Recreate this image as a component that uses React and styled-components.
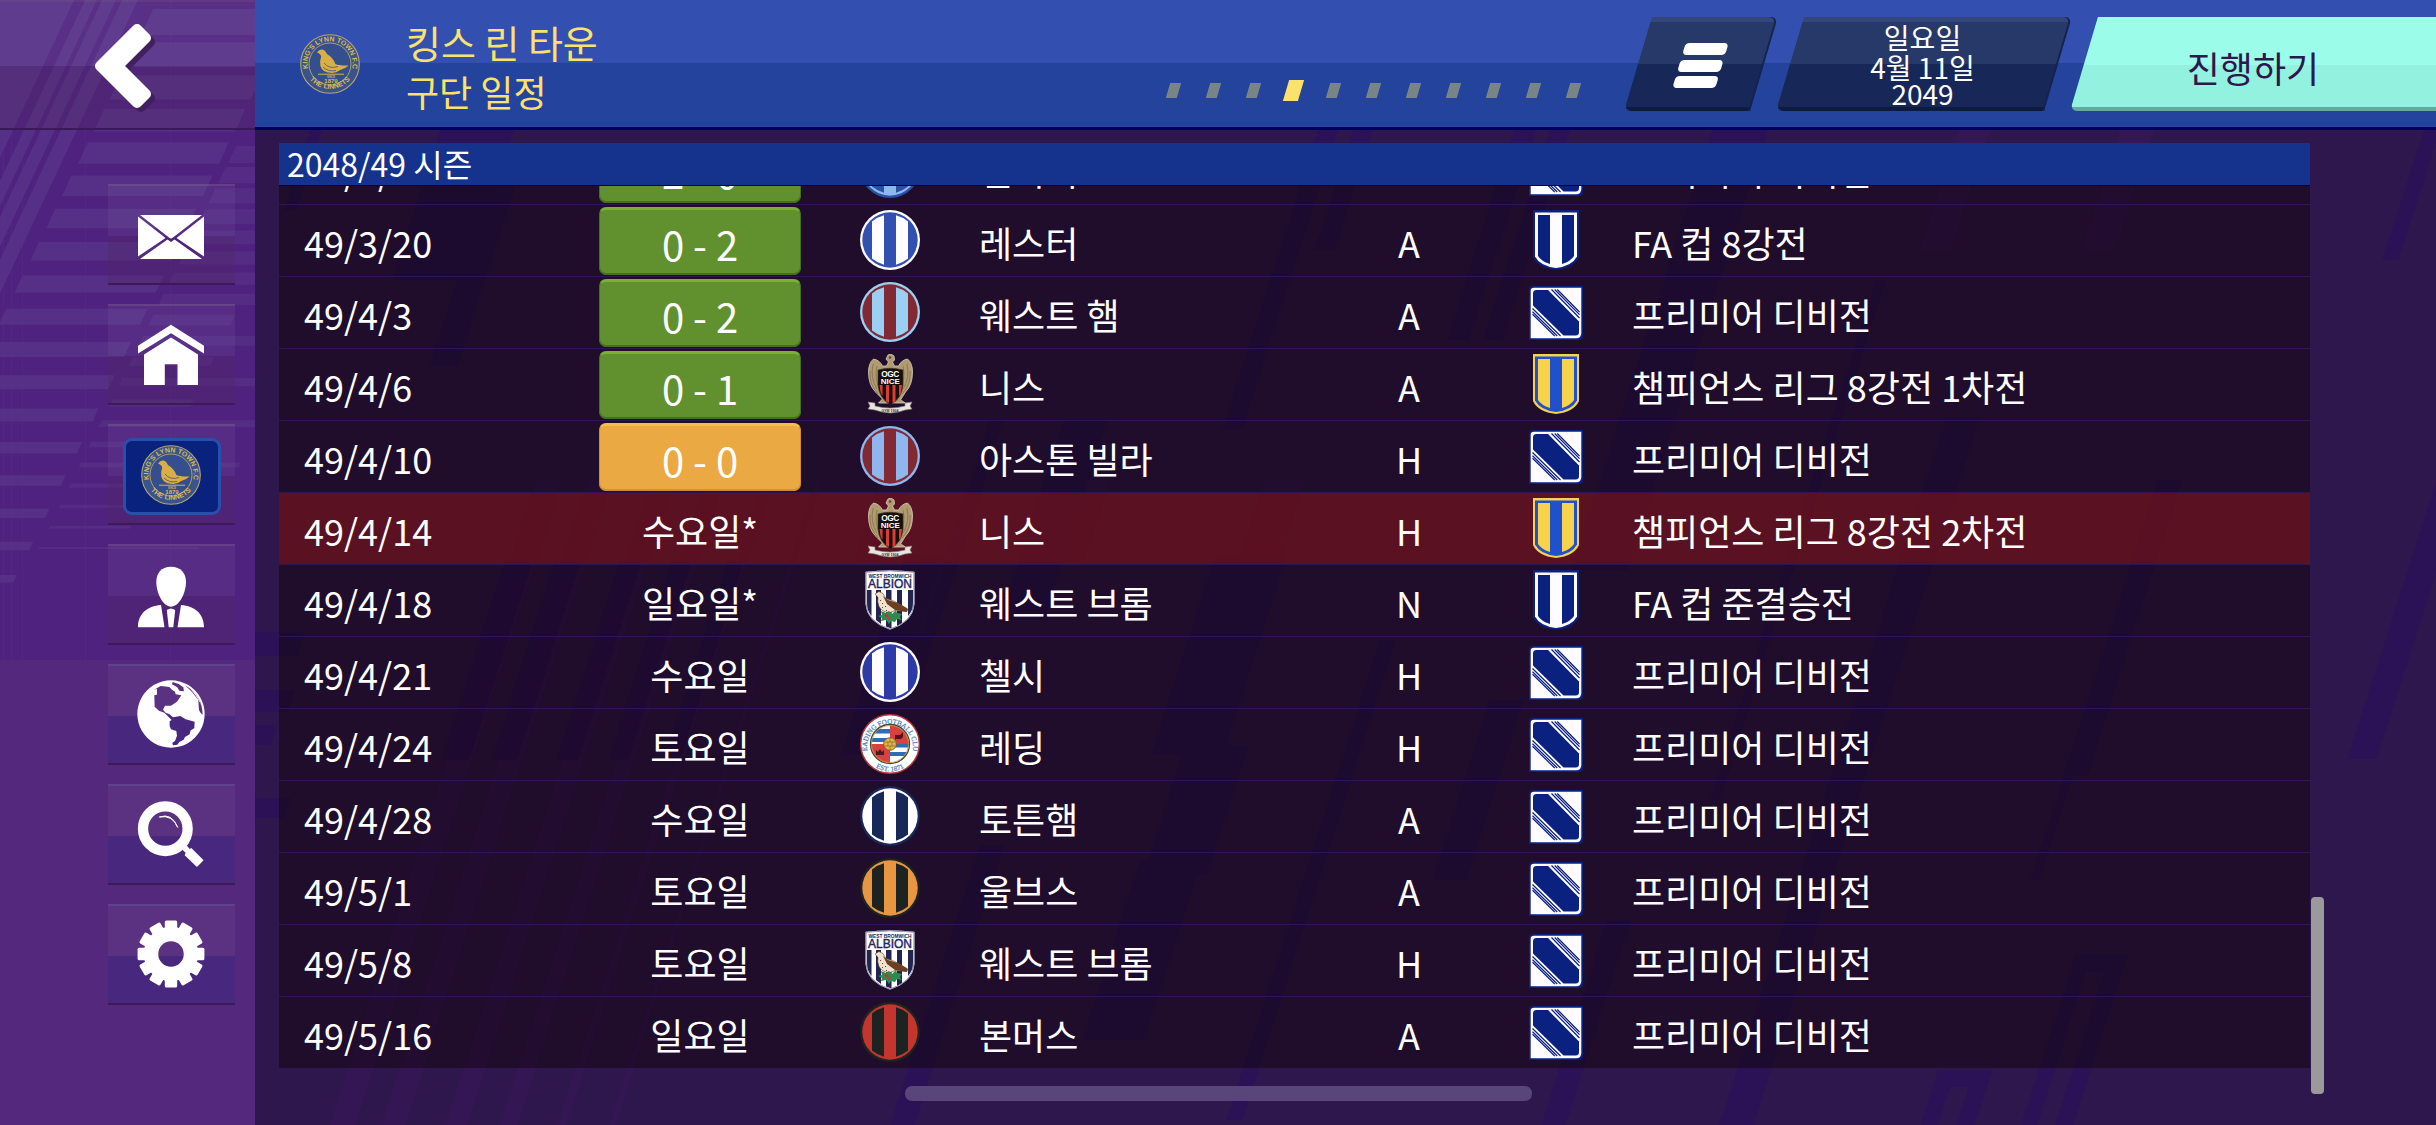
import React from "react";
import styled, { createGlobalStyle } from "styled-components";

const GlobalStyle = createGlobalStyle`
  * {
    box-sizing: border-box;
  }

  body {
    margin: 0;
    background-color: #2e174d;
    font-family: "Noto Sans CJK KR", "Noto Sans", sans-serif;
    color: white;
  }
`;

const Page = styled.div`
  position: relative;
  width: 2436px;
  height: 1125px;
  overflow: hidden;
  display: grid;
  grid-template-columns: 255px 1fr;
  background-color: #2e174d;
`;

const Backdrop = styled.svg`
  position: absolute;
  top: 0;
  left: 0;
`;

const Sidebar = styled.nav`
  position: relative;
  background-color: #54287c;
`;

const BackButton = styled.div`
  position: relative;
  height: 130px;
  border-top: 2px solid rgba(255, 255, 255, 0.1);
  border-bottom: 2px solid #3a1a5a;
  background: linear-gradient(
    rgba(255, 255, 255, 0.06) 64px,
    rgba(82, 44, 96, 0.25) 64px
  );
  margin-bottom: 54px;

  svg {
    display: block;
    margin-top: -2px;
  }
`;

const NavList = styled.div`
  position: relative;
  display: flex;
  flex-direction: column;
  gap: 19px;
  margin-left: 108px;
  width: 127px;
`;

const NavButton = styled.div`
  height: 101px;
  border-top: 2px solid rgba(255, 255, 255, 0.13);
  border-bottom: 2px solid #3c1a56;
  background: linear-gradient(
    rgba(255, 255, 255, 0.045) 50px,
    ${(props) => (props.$low ? "rgba(50, 38, 130, 0.34)" : "rgba(80, 36, 96, 0.3)")} 50px
  );

  > svg {
    display: block;
    margin-top: -2px;
  }
`;

const Selected = styled.div`
  width: 98px;
  height: 77px;
  margin: 12px 0 0 15px;
  border: 3px solid #2b4dab;
  border-radius: 9px;
  background-color: #08227d;
  display: flex;
  align-items: center;
  justify-content: center;
  padding: 0 2px 4px 0;
`;

const Main = styled.main`
  position: relative;
  display: flex;
  flex-direction: column;
  min-width: 0;
`;

const Header = styled.header`
  height: 130px;
  display: flex;
  border-bottom: 3px solid #00005c;
  background: linear-gradient(#3350b0 63px, #24439d 63px);
  overflow: hidden;
`;

const HeaderCrest = styled.div`
  flex: none;
  margin: 34px 0 0 45px;
  width: 60px;
`;

const Titles = styled.div`
  flex: none;
  margin: 18px 0 0 46px;
  width: 747px;
  color: #fae26c;
`;

const Title = styled.div`
  font-size: 38px;
  line-height: 48px;
`;

const Subtitle = styled.div`
  font-size: 36px;
  line-height: 50px;
`;

const Pager = styled.div`
  flex: none;
  display: flex;
  align-items: center;
  height: 22px;
  margin: 79px 45px 0 0;
  width: 440px;
`;

const PagerSlot = styled.div`
  width: 40px;
  flex: none;
  display: flex;
  justify-content: center;
`;

const Dash = styled.div`
  width: ${(props) => (props.$active ? 15 : 11)}px;
  height: ${(props) => (props.$active ? 21 : 15)}px;
  background-color: ${(props) => (props.$active ? "#fae26c" : "#778488")};
  transform: skewX(-16.5deg);
`;

const Slanted = styled.div`
  position: relative;
  flex: none;
  width: ${(props) => props.$width}px;
  height: 94px;
  margin: 17px 26px 0 0;
  display: flex;
  flex-direction: column;
  align-items: center;

  &:before {
    content: "";
    position: absolute;
    inset: 0;
    transform: skewX(-16.5deg);
    border-radius: 0 7px 0 7px;
    background: ${(props) =>
      props.$mint
        ? "linear-gradient(#9bfde9 0 48px, #92f2df 48px 90px, #66aa9c 90px)"
        : "linear-gradient(#35477a 0 5px, #273969 5px 47px, #172858 47px 90px, #0e1b3e 90px)"};
    box-shadow: ${(props) => (props.$mint ? "none" : "inset -2px 0 0 #142350")};
  }
`;

const Bars = styled.div`
  position: relative;
  display: flex;
  flex-direction: column;
  gap: 4.5px;
  margin: 26px 2px 0 0;
  transform: skewX(-16.5deg);
`;

const Bar = styled.div`
  width: 43px;
  height: 12px;
  border-radius: 4px;
  background-color: white;
`;

const DateLine = styled.div`
  position: relative;
  font-size: 28px;
  line-height: ${(props) => props.$height}px;
  margin: ${(props) => props.$top || 0}px 3px 0 0;
`;

const Continue = styled.div`
  position: relative;
  margin: 24px 0 0 -62px;
  font-size: 36px;
  line-height: 52px;
  color: #2e174d;
`;

const Content = styled.div`
  position: relative;
  display: flex;
  padding: 13px 0 0 24px;
`;

const Table = styled.section`
  width: 2031px;
`;

const Season = styled.div`
  height: 42px;
  padding-left: 8px;
  background-color: #15338d;
  font-size: 32px;
  line-height: 41px;
`;

const List = styled.div`
  height: 883px;
  overflow: hidden;
  border-top: 1px solid #06003c;
  background-color: rgba(20, 5, 18, 0.56);
`;

const Rows = styled.div`
  margin-top: -54px;
`;

const Row = styled.div`
  height: 72px;
  display: grid;
  grid-template-columns: 295px 202px 178px 330px 200px 94px 1fr;
  align-items: center;
  padding-left: 25px;
  border-top: 1px solid #2f1456;
  background-color: ${(props) => (props.$next ? "rgba(130, 20, 26, 0.6)" : "transparent")};
  font-size: 36px;
  white-space: nowrap;
`;

const Cell = styled.div`
  line-height: 52px;
  padding-top: 3px;
  text-align: ${(props) => props.$align || "left"};
`;

const Competition = styled(Cell)`
  padding-left: 29px;
`;

const Icon = styled.div`
  display: flex;
  justify-content: center;
  padding-bottom: 2px;
`;

const resultColors = {
  win: { fill: "#61912e", light: "#7bb036", dark: "#466f20" },
  draw: { fill: "#eaa943", light: "#f6bd4c", dark: "#d58f33" },
};

const Score = styled.div`
  height: 68px;
  border-radius: 7px;
  background-color: ${(props) => resultColors[props.$result].fill};
  border: 1px solid ${(props) => resultColors[props.$result].dark};
  border-top: 3px solid ${(props) => resultColors[props.$result].light};
  box-shadow: inset 0 -1px 0 ${(props) => resultColors[props.$result].dark};
  font-size: 40px;
  line-height: 69px;
  text-align: center;
`;

const ScrollThumb = styled.div`
  width: 13px;
  height: 197px;
  margin: 754px 0 0 1px;
  border-radius: 4px;
  background-color: #9c999c;
`;

const HomeIndicator = styled.div`
  position: absolute;
  left: 905px;
  bottom: 24px;
  width: 627px;
  height: 15px;
  border-radius: 7px;
  background-color: #5a457a;
`;

// slanted band: x is the left edge at the top, slope is how far it leans per pixel
const band = (x, y, w, h, slope = 0.32) =>
  `M${x} ${y}h${w}l${-h * slope} ${h}h${-w}z`;

const blueBands = [
  [310, 130, 12, 80], [440, 130, 74, 150], [487, 187, 28, 180],
  [1318, 130, 20, 300], [1353, 130, 20, 120], [1514, 130, 22, 210], [1550, 130, 20, 210],
  [1712, 130, 56, 440], [1876, 280, 10, 520], [1946, 417, 34, 708], [2424, 130, 16, 130],
  [2440, 470, 29, 289], [2158, 480, 24, 296], [2068, 762, 9, 118], [1215, 555, 72, 200],
  [1185, 745, 64, 130], [1140, 860, 62, 180], [905, 555, 40, 200], [990, 420, 14, 260],
  [1064, 420, 44, 200], [1380, 640, 16, 480], [1490, 700, 34, 180], [1607, 920, 24, 205],
  [980, 845, 24, 280], [2076, 954, 16, 171], [2110, 954, 18, 171], [2092, 954, 18, 18],
  [1938, 1071, 17, 54], [1974, 1071, 18, 54], [1955, 1071, 19, 16],
  [505, 560, 28, 200], [555, 560, 26, 200], [620, 560, 22, 200], [672, 560, 20, 200],
  [728, 560, 16, 200], [255, 632, 50, 24], [255, 690, 40, 22], [255, 725, 22, 20], [255, 798, 36, 20],
];

const purpleBands = [
  [536, 480, 26, 645], [588, 480, 24, 645], [652, 480, 22, 645], [706, 480, 18, 645],
  [764, 480, 9, 645], [816, 480, 6, 645], [1958, 130, 32, 120], [2120, 130, 34, 120],
  [880, 480, 30, 85], [1084, 480, 26, 85], [1265, 480, 40, 85],
];

const Background = () => (
  <Backdrop width="2436" height="1125">
    <path d={purpleBands.map((b) => band(...b)).join("")} fill="#371757" opacity="0.8" />
    <path d={blueBands.map((b) => band(...b)).join("")} fill="#2b1058" opacity="0.75" />
  </Backdrop>
);

const sideStripes = Array.from({ length: 18 }, (_, i) => {
  const y = 9 + i * 33.3;
  const h = 26 - i * 1.1;
  const left = Math.max(-30, 153 - (y - 9) * 0.49);
  const right = 229 - (y - 142) * 0.49;
  return band(left, y, Math.max(4, right - left), h, 0.45);
});

const thinStripes = Array.from({ length: 20 }, (_, i) => {
  const y = 146 + i * 21.1;
  const left = 236 - (y - 146) * 0.49;
  const w = y < 310 ? 120 : i % 2 ? 160 : 82;
  return band(left, y, w, Math.max(2, 17 - i * 0.8), 0.45);
});

const SideBackground = () => (
  <Backdrop width="255" height="1125">
    <rect width="255" height="660" fill="#4f227f" />
    <path d="M0 0H74L0 158z" fill="#553086" />
    {[[85, 12], [102, 14], [122, 16]].map(([x, w]) => (
      <path key={x} d={band(x, 0, w, 310, 0.47)} fill="#553086" />
    ))}
    <path d={sideStripes.join("")} fill="#553086" />
    <path d={thinStripes.join("")} fill="#553086" opacity="0.8" />
    <path d="M3.5 130V660M11.5 130V660M22.5 130V660M85.5 0V660M170.5 0V660" stroke="#5b3487" opacity=".3" />
  </Backdrop>
);

const ClubCrest = ({ id }) => (
  <svg width="60" height="60" viewBox="0 0 60 60">
    <defs>
      <path id={id + "Top"} d="M8 34.5A22.500 22.500 0 1 1 52 34.5" />
      <path id={id + "Low"} d="M3.500 33A27 27 0 0 0 56.500 33" />
    </defs>
    <circle cx="30" cy="30" r="29.3" fill="#3a538a" stroke="#b8a66c" strokeWidth="1.1" />
    <circle cx="30" cy="30" r="21" fill="#354f8c" stroke="#b8a66c" strokeWidth="0.9" />
    <g fill="#d6ba5e" fontFamily="Liberation Sans" fontWeight="700" textAnchor="middle">
      <text fontSize="7">
        <textPath href={`#${id}Top`} startOffset="50%">KING'S LYNN TOWN F.C</textPath>
      </text>
      <text fontSize="7">
        <textPath href={`#${id}Low`} startOffset="50%">THE LINNETS</textPath>
      </text>
      <text x="31" y="49.3" fontSize="6">1879</text>
      <text x="31" y="44" fontSize="2.6">SINCE</text>
    </g>
    <path
      d="M17 18.400q2.400-3.600 5.800-2.800q2.600 1 4.200 4.400q6 3.400 8.400 10q4 1.800 13.300 1.400q-3.600 3.200-9 4.800q-4 3.400-9.400 2.600q-8-.6-9.900-6.800q-1-5 .8-9.400q-.6-3-4.200-4.200z"
      fill="#d8ae45"
    />
    <path d="M24 29q5 6.500 14 3.500M23 33q5 5 13 3.500" fill="none" stroke="#45568a" strokeWidth="0.8" />
    <path d="M18 40.300h26" stroke="#a8965c" strokeWidth="1.400" />
  </svg>
);

const StripedCrest = ({ colors: [ring, base, stripe] }) => (
  <svg width="60" height="60" viewBox="0 0 60 60">
    <circle cx="30" cy="30" r="30" fill={ring} />
    <circle cx="30" cy="30" r="27.700" fill={base} />
    <path d="M12 11.500Q17.500 7 24 5.300V54.700Q17.500 53 12 48.500z" fill={stripe} />
    <path d="M48 11.500Q42.500 7 36 5.300V54.700Q42.500 53 48 48.500z" fill={stripe} />
  </svg>
);

const NiceCrest = () => (
  <svg width="60" height="60" viewBox="0 0 60 60">
    <path d="M26 5l2-4 3-1 3 2 .5 4-2 2 2 4h4q3-6 9-7q5 4 5 13q0 13-7 20l-5 8 5 3h-27l4-4-7-7q-7-7-7-20q0-9 5-13q6 1 9 7h4l2-4z" fill="#b09a70" stroke="#d9cfc0" strokeWidth="0.8" />
    <path d="M13 10q-3 14 4 25M17 12q-3 13 3 24M10 17q-1 14 8 23M47 10q3 14-4 25M43 12q3 13-3 24M50 17q1 14-8 23" fill="none" stroke="#806a45" strokeWidth="0.7" />
    <circle cx="30" cy="3.500" r="1.200" fill="#5b4934" />
    <path d="M18 16q12-3.500 25 0V31q-1 13-12.500 20Q19 44 18 31z" fill="#15100f" stroke="#413325" strokeWidth="0.7" />
    <path d="M19.500 31h3v11l-2-4zM26 31h3v18l-3-2zM32.500 31h3v16l-3 3zM39 31h3l-1 8-2 3z" fill="#e03a35" />
    <g fill="white" fontFamily="Liberation Sans" fontWeight="700" textAnchor="middle">
      <text x="30.300" y="23" fontSize="8.400" textLength="18">OGC</text>
      <text x="30.300" y="30" fontSize="8" textLength="19">NICE</text>
    </g>
    <path d="M8 48l7 1v3q15 4 30 0v-3l7-1-2 4 2 3-7 1q-14 6-30 0l-7-1 2-3z" fill="#e9e4df" stroke="#877b70" strokeWidth="0.6" />
    <text x="30" y="58" fontSize="3.600" fontWeight="700" fontFamily="Liberation Sans" textAnchor="middle" fill="#333">GYM 1904</text>
  </svg>
);

const AlbionCrest = () => (
  <svg width="50" height="60" viewBox="0 0 50 60">
    <path d="M.8 2Q25-.8 49.200 2V34Q48 52 25 59.300Q2 52 .8 34z" fill="#fff" stroke="#222350" strokeWidth="1" />
    <path d="M2 20h4.500v26Q2 41 2 33zM11 20h5v34l-5-4zM21 20h5.500v38h-1.500l-4-1.500zM32 20h5v33l-5 3zM43 20h5v13q0 8-5 13z" fill="#23254f" />
    <path d="M.8 2Q25-.8 49.200 2V34Q48 52 25 59.300Q2 52 .8 34z" fill="none" stroke="#c9c9dc" strokeWidth="0.8" />
    <g fill="#20245a" fontFamily="Liberation Sans" textAnchor="middle">
      <text x="25" y="8.300" fontSize="5" fontWeight="700" textLength="43" lengthAdjust="spacingAndGlyphs">WEST BROMWICH</text>
      <text x="25" y="18.300" fontSize="12" stroke="#20245a" strokeWidth="0.4" textLength="44" lengthAdjust="spacingAndGlyphs">ALBION</text>
    </g>
    <path d="M10 24l4-2.500 4 2 3 5 9 3 12 7-1 3-11-1-5 2q-8 0-11-6-2-5-1-9z" fill="#f0e3cd" stroke="#4c2e1b" strokeWidth="0.500" />
    <path d="M18 26l5 4 10 3 10 6-1 3-12-2-8-6z" fill="#6d3f22" />
    <path d="M15 30l1 1M17 33l1 1M17 37l1 1M20 36l1 1M21 40l1 1" stroke="#6b4a2c" />
    <path d="M13 46l4-1-1-4 5 2 3-2 3 3 4-4 1 3 5 1-2 3 2 3-5-1-2 3-4-1-2 3-3-4-5 1 1-3z" fill="#2f8a4e" />
    <circle cx="21.500" cy="45.500" r="1.700" fill="#d22c36" />
    <circle cx="24" cy="48" r="1.500" fill="#d22c36" />
  </svg>
);

const ReadingCrest = () => (
  <svg width="60" height="60" viewBox="0 0 60 60">
    <defs>
      <path id="readingTop" d="M7.500 37.500A23 23 0 1 1 52.500 37.500" />
      <path id="readingLow" d="M7 45A27.500 27.500 0 0 0 53 45" />
      <clipPath id="readingCore"><circle cx="30" cy="30" r="19" /></clipPath>
    </defs>
    <circle cx="30" cy="30" r="29.300" fill="#fff" stroke="#b8393d" strokeWidth="1.400" />
    <g fill="#3d7fbd" stroke="#3d7fbd" strokeWidth="0.200" fontFamily="Liberation Serif" textAnchor="middle">
      <text fontSize="7">
        <textPath href="#readingTop" startOffset="50%">READING FOOTBALL CLUB</textPath>
      </text>
      <text fontSize="7">
        <textPath href="#readingLow" startOffset="50%">EST. 1871</textPath>
      </text>
    </g>
    <g clipPath="url(#readingCore)">
      <rect x="10" y="10" width="40" height="40" fill="#fff" />
      <path d="M10 15h20v4.500H10zM10 24h20v4H10zM30 30h20v3.500H30zM30 38h20v4H30z" fill="#2e6db5" />
      <path d="M30 10h20v20H30zM10 30h20v20H10z" fill="#d8413f" />
      <path d="M35 21l5 0 3-3v5l-2 2h-5l-1 1zM16 36l2 2 2-3 2 3 2-2v5h-8z" fill="#4c1a1c" />
    </g>
    <circle cx="30" cy="30" r="19.500" fill="none" stroke="#4b4232" strokeWidth="1.300" />
    <circle cx="30" cy="30" r="18.500" fill="none" stroke="#c9993d" strokeWidth="0.800" />
    <circle cx="30" cy="30" r="6.300" fill="#e2b547" stroke="#7c5f25" strokeWidth="0.900" />
    <path d="M25 28h10M25 32h10M30 24v4M28 28v4M32 28v4M30 32v4" stroke="#86642a" strokeWidth="0.700" />
  </svg>
);

const LeagueMark = styled.svg`
  margin-top: 2px;
`;

const PremierLogo = () => (
  <LeagueMark width="54" height="54" viewBox="0 0 54 54">
    <path d="M4 0H54V49Q54 54 49 54H0V5Q0 0 4 0z" fill="#0a2180" />
    <path d="M5 1.700H52.300V47Q52.300 52.300 47 52.300H1.700V5Q1.700 1.700 5 1.700z" fill="#fffcff" />
    <path d="M7.500 4H19L50 35.500V46Q50 49.500 46.500 49.500H34.500L4 19.500V7.500Q4 4 7.500 4z" fill="#0a2180" />
    <path d="M22.500 3.500L50.500 32M25.700 3.500L50.500 28.700M28.300 3.500L50.500 26M3.500 22.500L31.500 50M3.500 25.700L28.300 50M3.500 28.300L25.700 50" stroke="#0a2180" strokeWidth="1.200" />
  </LeagueMark>
);

const ShieldLogo = ({ colors: [edge, line, base, stripe] }) => (
  <svg width="46" height="60" viewBox="0 0 46 60">
    <path d="M0 0H46V47Q41 58 23 60Q5 58 0 47z" fill={edge} />
    <path d="M2 2.500H44V46.500Q39 56 23 58Q7 56 2 46.500z" fill={line} />
    <path d="M5 5H17V54Q8 51 5 46zM29 5H41V46Q38 51 29 54z" fill={base} />
    <path d="M17 4.500H29V55.500H17z" fill={stripe} />
  </svg>
);

const crests = {
  mancity: ["#2850a8", "#8fb6ef", "#2850a8"],
  leicester: ["#fffcff", "#3250b0", "#fffcff"],
  westham: ["#9bcff3", "#812a34", "#9bcff3"],
  villa: ["#8fb6ef", "#812a34", "#8fb6ef"],
  chelsea: ["#fffcff", "#2e3aa6", "#fffcff"],
  spurs: ["#172858", "#fffcff", "#172858"],
  wolves: ["#1c2321", "#e89642", "#1c2321"],
  bournemouth: ["#1c2321", "#c4352e", "#1c2321"],
};

const TeamCrest = ({ team }) => {
  if (team === "nice") return <NiceCrest />;
  if (team === "albion") return <AlbionCrest />;
  if (team === "reading") return <ReadingCrest />;
  return <StripedCrest colors={crests[team]} />;
};

const CompetitionLogo = ({ type }) => {
  if (type === "fa") return <ShieldLogo colors={["#0a2180", "#fffcff", "#0a2180", "#fffcff"]} />;
  if (type === "cl") return <ShieldLogo colors={["#f7d34b", "#2150cd", "#f7d34b", "#2150cd"]} />;
  return <PremierLogo />;
};

const league = "프리미어 디비전";

const fixtures = [
  { date: "49/3/13", score: "2 - 0", result: "win", crest: "mancity", team: "맨시티", venue: "H", type: "pl", comp: league },
  { date: "49/3/20", score: "0 - 2", result: "win", crest: "leicester", team: "레스터", venue: "A", type: "fa", comp: "FA 컵 8강전" },
  { date: "49/4/3", score: "0 - 2", result: "win", crest: "westham", team: "웨스트 햄", venue: "A", type: "pl", comp: league },
  { date: "49/4/6", score: "0 - 1", result: "win", crest: "nice", team: "니스", venue: "A", type: "cl", comp: "챔피언스 리그 8강전 1차전" },
  { date: "49/4/10", score: "0 - 0", result: "draw", crest: "villa", team: "아스톤 빌라", venue: "H", type: "pl", comp: league },
  { date: "49/4/14", day: "수요일*", crest: "nice", team: "니스", venue: "H", type: "cl", comp: "챔피언스 리그 8강전 2차전", next: true },
  { date: "49/4/18", day: "일요일*", crest: "albion", team: "웨스트 브롬", venue: "N", type: "fa", comp: "FA 컵 준결승전" },
  { date: "49/4/21", day: "수요일", crest: "chelsea", team: "첼시", venue: "H", type: "pl", comp: league },
  { date: "49/4/24", day: "토요일", crest: "reading", team: "레딩", venue: "H", type: "pl", comp: league },
  { date: "49/4/28", day: "수요일", crest: "spurs", team: "토튼햄", venue: "A", type: "pl", comp: league },
  { date: "49/5/1", day: "토요일", crest: "wolves", team: "울브스", venue: "A", type: "pl", comp: league },
  { date: "49/5/8", day: "토요일", crest: "albion", team: "웨스트 브롬", venue: "H", type: "pl", comp: league },
  { date: "49/5/16", day: "일요일", crest: "bournemouth", team: "본머스", venue: "A", type: "pl", comp: league },
];

const NavIcon = ({ children }) => (
  <svg width="127" height="101" viewBox="0 0 127 101" fill="white">
    {children}
  </svg>
);

const MailIcon = () => (
  <NavIcon>
    <path d="M32 31H94L65 53.500Q63 55.500 61 53.500z" />
    <path d="M30 32.500L57.500 54L30 72.500zM96 32.500L68.500 54L96 72.500zM32 75L59.500 55.500L63 58L66.500 55.500L94 75z" />
  </NavIcon>
);

const HomeIcon = () => (
  <NavIcon>
    <path d="M63 20.800L96 41.700V49.500L63 29.300L30 49.500V41.700z" />
    <path d="M63 33.500L90 50.500V81H69.500V60.300H56.800V81H36V50.500z" />
  </NavIcon>
);

const ManagerIcon = () => (
  <NavIcon>
    <path d="M63 22.700C73 22.700 78 29.500 78 38C78 49 71 62.700 63 62.700C55 62.700 48.300 49 48.300 38C48.300 29.500 53 22.700 63 22.700z" />
    <path d="M30 83.300C30 70 39 62 53 61L56.500 83.300zM96 83.300C96 70 87 62 73 61L69.500 83.300z" />
    <path d="M58.800 66Q63 63 67.200 66L65.300 83.300H60.700z" />
  </NavIcon>
);

const WorldIcon = () => (
  <NavIcon>
    <path
      transform="translate(-108 -4) scale(.3333)"
      fillRule="evenodd"
      d="M513 61a101 101 0 1 0 .1 0zM461 90l21-12 26 3 8 8 9 6 2 8 17 3-13 19-18 12h-18l-6 12 8 9 12 5 10 9 22-4 16 10 27 7-1 20-11 6-3 12-14 8-4 8-13 7-6 8-13 2-2-8 8-5 6-16-2-14-16-5-4-10v-14l6-4-22-22-16-6-13-12-1-34 8-2v-18zM518 66l18 6 14 10 2 12-14-2-6-10-16-9zM555 76q28 14 42 42q9 14 11 46q-8-6-11-14l-2-30q-16-24-40-44z"
    />
    <path transform="translate(-108 -4) scale(.3333)" d="M560 76q34 24 44 60q-16-34-44-60z" />
  </NavIcon>
);

const SearchIcon = () => (
  <NavIcon>
    <g transform="translate(-108 -124) scale(.3333)">
      <circle cx="496" cy="506" r="67" fill="none" stroke="white" strokeWidth="31" />
      <path d="M478 471Q516 458 533 502Q518 464 478 471z" stroke="white" strokeWidth="3" />
      <path d="M547 569l13-13 9 11 5-3 37 37-20 20-37-35 3-8z" />
    </g>
  </NavIcon>
);

const GearIcon = () => (
  <NavIcon>
    <g transform="translate(63 50)">
      <circle r="20" fill="none" stroke="white" strokeWidth="14.500" />
      {Array.from({ length: 12 }, (_, i) => (
        <rect key={i} x="-6.200" y="-33.400" width="12.400" height="12" rx="1.500" transform={`rotate(${i * 30})`} />
      ))}
    </g>
  </NavIcon>
);

const FixtureRow = ({ item }) => (
  <Row $next={item.next}>
    <Cell>{item.date}</Cell>
    {item.score ? (
      <Score $result={item.result}>{item.score}</Score>
    ) : (
      <Cell $align="center">{item.day}</Cell>
    )}
    <Icon>
      <TeamCrest team={item.crest} />
    </Icon>
    <Cell>{item.team}</Cell>
    <Cell $align="center">{item.venue}</Cell>
    <Icon>
      <CompetitionLogo type={item.type} />
    </Icon>
    <Competition>{item.comp}</Competition>
  </Row>
);

const App = () => {
  return (
    <Page>
      <GlobalStyle />
      <Background />
      <Sidebar>
        <SideBackground />
        <BackButton>
          <svg width="255" height="128">
            <path d="M100 66L137 29L146 38L118 66L146 94L137 103z" transform="translate(4 4)" fill="#42205f" stroke="#42205f" strokeWidth="10" strokeLinejoin="round" />
            <path d="M100 66L137 29L146 38L118 66L146 94L137 103z" fill="white" stroke="white" strokeWidth="10" strokeLinejoin="round" />
          </svg>
        </BackButton>
        <NavList>
          <NavButton><MailIcon /></NavButton>
          <NavButton><HomeIcon /></NavButton>
          <NavButton>
            <Selected>
              <ClubCrest id="nav" />
            </Selected>
          </NavButton>
          <NavButton><ManagerIcon /></NavButton>
          <NavButton $low><WorldIcon /></NavButton>
          <NavButton $low><SearchIcon /></NavButton>
          <NavButton $low><GearIcon /></NavButton>
        </NavList>
      </Sidebar>
      <Main>
        <Header>
          <HeaderCrest>
            <ClubCrest id="header" />
          </HeaderCrest>
          <Titles>
            <Title>킹스 린 타운</Title>
            <Subtitle>구단 일정</Subtitle>
          </Titles>
          <Pager>
            {Array.from({ length: 11 }, (_, i) => (
              <PagerSlot key={i}>
                <Dash $active={i === 3} />
              </PagerSlot>
            ))}
          </Pager>
          <Slanted $width={126}>
            <Bars>
              <Bar />
              <Bar />
              <Bar />
            </Bars>
          </Slanted>
          <Slanted $width={268}>
            <DateLine $height={28} $top={6}>일요일</DateLine>
            <DateLine $height={28} $top={2}>4월 11일</DateLine>
            <DateLine $height={28} $top={-2}>2049</DateLine>
          </Slanted>
          <Slanted $width={400} $mint>
            <Continue>진행하기</Continue>
          </Slanted>
        </Header>
        <Content>
          <Table>
            <Season>2048/49 시즌</Season>
            <List>
              <Rows>
                {fixtures.map((item) => (
                  <FixtureRow item={item} key={item.date} />
                ))}
              </Rows>
            </List>
          </Table>
          <ScrollThumb />
        </Content>
      </Main>
      <HomeIndicator />
    </Page>
  );
};

export default App;
